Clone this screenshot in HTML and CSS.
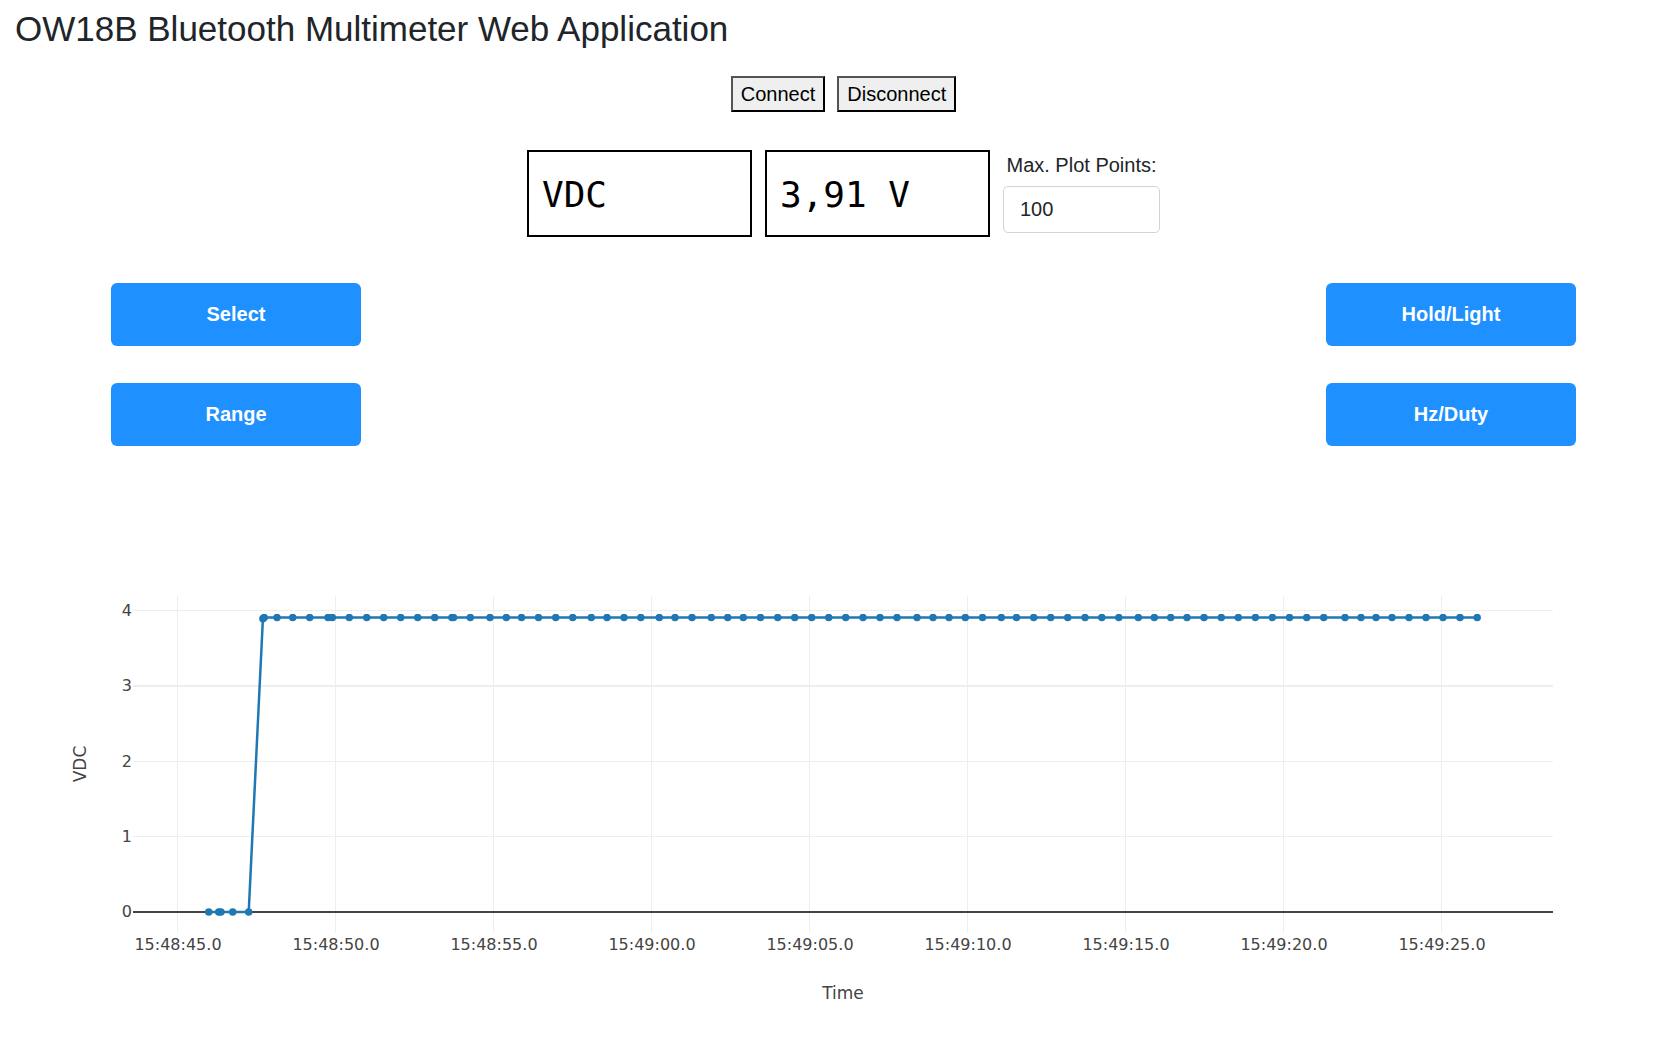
FILE: index.html
```html
<!DOCTYPE html>
<html lang="en">
<head>
  <meta charset="utf-8">
  <meta name="viewport" content="width=device-width, initial-scale=1">
  <title>OW18B Bluetooth Multimeter Web Application</title>
  <link rel="stylesheet" href="styles.css">
</head>
<body>
  <h1 class="title">OW18B Bluetooth Multimeter Web Application</h1>

  <div class="connection">
    <button type="button" class="plain-button">Connect</button>
    <button type="button" class="plain-button">Disconnect</button>
  </div>

  <div class="readout">
    <input class="display" type="text" value="VDC" aria-label="Mode" readonly>
    <input class="display" type="text" value="3,91 V" aria-label="Value" readonly>
    <div class="field">
      <label class="field-label" for="max-points">Max. Plot Points:</label>
      <input class="field-input" id="max-points" type="number" value="100">
    </div>
  </div>

  <div class="controls">
    <button type="button" class="control">Select</button>
    <button type="button" class="control">Hold/Light</button>
    <button type="button" class="control">Range</button>
    <button type="button" class="control">Hz/Duty</button>
  </div>

  <svg class="chart" viewBox="15 520 1657 500" role="img" aria-label="VDC over time">
    <defs>
      <marker id="dot" viewBox="-4 -4 8 8" markerWidth="8" markerHeight="8" markerUnits="userSpaceOnUse">
        <circle class="dot" r="3.75"/>
      </marker>
    </defs>
    <path class="grid" d="M177.500 596V933M335.500 596V933M493.500 596V933M651.500 596V933M809.500 596V933M967.500 596V933M1125.500 596V933M1283.500 596V933M1441.500 596V933M133 610.500H1553M133 761.500H1553M133 836.500H1553"/>
    <path class="grid grid-wide" d="M133 686H1553"/>
    <path class="zero" d="M133 912H1553"/>
    <polyline class="trace" points="208.700,912 218.700,912 220.900,912 232.700,912 248.700,912 262.900,618.700 264.200,617.500 277,617.500 292.700,617.500 309.700,617.500 328,617.500 332.300,617.500 349.300,617.500 366.700,617.500 383.700,617.500 400.700,617.500 417.700,617.500 434.700,617.500 451.900,617.500 453.500,617.500 470.300,617.500 490,617.500 506.300,617.500 521.500,617.500 538.500,617.500 555.700,617.500 572.700,617.500 591.300,617.500 607,617.500 624,617.500 640.800,617.500 659.300,617.500 675,617.500 692,617.500 711.300,617.500 727.700,617.500 743.300,617.500 760.500,617.500 777.700,617.500 794.700,617.500 811.700,617.500 828.700,617.500 845.700,617.500 863,617.500 880,617.500 897,617.500 917,617.500 933,617.500 949,617.500 965.300,617.500 982.500,617.500 1001.300,617.500 1016.500,617.500 1033.700,617.500 1050.700,617.500 1067.700,617.500 1085,617.500 1101.800,617.500 1118.800,617.500 1138.300,617.500 1154.300,617.500 1170.700,617.500 1187,617.500 1204,617.500 1221.300,617.500 1238.300,617.500 1255.400,617.500 1272.400,617.500 1289.500,617.500 1306.700,617.500 1323.700,617.500 1345,617.500 1361,617.500 1376,617.500 1392,617.500 1409,617.500 1426,617.500 1443,617.500 1460,617.500 1477.200,617.500"/>
    <g class="tick tick-y">
      <text x="132" y="616">4</text>
      <text x="132" y="691">3</text>
      <text x="132" y="767">2</text>
      <text x="132" y="842">1</text>
      <text x="132" y="917">0</text>
    </g>
    <g class="tick tick-x">
      <text x="178" y="950">15:48:45.0</text>
      <text x="336" y="950">15:48:50.0</text>
      <text x="494" y="950">15:48:55.0</text>
      <text x="652" y="950">15:49:00.0</text>
      <text x="810" y="950">15:49:05.0</text>
      <text x="968" y="950">15:49:10.0</text>
      <text x="1126" y="950">15:49:15.0</text>
      <text x="1284" y="950">15:49:20.0</text>
      <text x="1442" y="950">15:49:25.0</text>
    </g>
    <text class="axis-title" x="843" y="999">Time</text>
    <text class="axis-title" transform="translate(86 764) rotate(-90)">VDC</text>
  </svg>
</body>
</html>
```
FILE: styles.css
```css
* {
  box-sizing: border-box;
}

body {
  margin: 0;
  padding: 8px 0 0 15px;
  background: #fff;
  color: #212529;
  font-family: "Liberation Sans", Arial, sans-serif;
  font-size: 20px;
  line-height: 30px;
}

button,
input {
  margin: 0;
  font: inherit;
}

.title {
  margin: 0 0 26px;
  font-size: 35px;
  font-weight: 400;
  line-height: 42px;
}

.connection {
  display: flex;
  justify-content: center;
  gap: 12px;
  margin-bottom: 38px;
}

.plain-button {
  padding: 1px 8px;
  border: 2px outset #000;
  background: #efefef;
  color: #000;
}

.readout {
  display: flex;
  flex-wrap: wrap;
  justify-content: center;
  gap: 13px;
  margin-bottom: 46px;
}

.display {
  width: 225px;
  height: 87px;
  padding: 2px 13px 0;
  border: 2px solid #000;
  background: #fff;
  color: #000;
  font-family: Consolas, "DejaVu Sans Mono", monospace;
  font-size: 36px;
}

.field {
  display: flex;
  flex-direction: column;
  gap: 6px;
  width: 157px;
}

.field-label {
  text-align: center;
  white-space: nowrap;
}

.field-input {
  width: 100%;
  height: 47px;
  padding: 0 16px;
  border: 1px solid #ced4da;
  border-radius: 5px;
  background: #fff;
  color: #212529;
}

.controls {
  display: grid;
  grid-template-columns: 250px 250px;
  justify-content: space-between;
  row-gap: 37px;
  margin-bottom: 74px;
  padding: 0 96px;
}

.control {
  height: 63px;
  padding: 0 8px 2px;
  border: 0;
  border-radius: 6px;
  background: #1e90ff;
  color: #fff;
  font-weight: 700;
}

.chart {
  display: block;
  width: 100%;
  font-family: Verdana, "DejaVu Sans", sans-serif;
}

.grid {
  fill: none;
  stroke: #eee;
  stroke-width: 1px;
}

.grid-wide {
  stroke-width: 2px;
}

.zero {
  stroke: #444;
  stroke-width: 2px;
}

.trace {
  fill: none;
  stroke: #1f77b4;
  stroke-width: 2.5;
  marker: url(#dot);
}

.dot {
  fill: #1f77b4;
}

.tick,
.axis-title {
  fill: #444;
}

.tick {
  font-size: 16px;
}

.tick-y {
  text-anchor: end;
}

.tick-x,
.axis-title {
  text-anchor: middle;
}

.axis-title {
  font-size: 17px;
}
```
